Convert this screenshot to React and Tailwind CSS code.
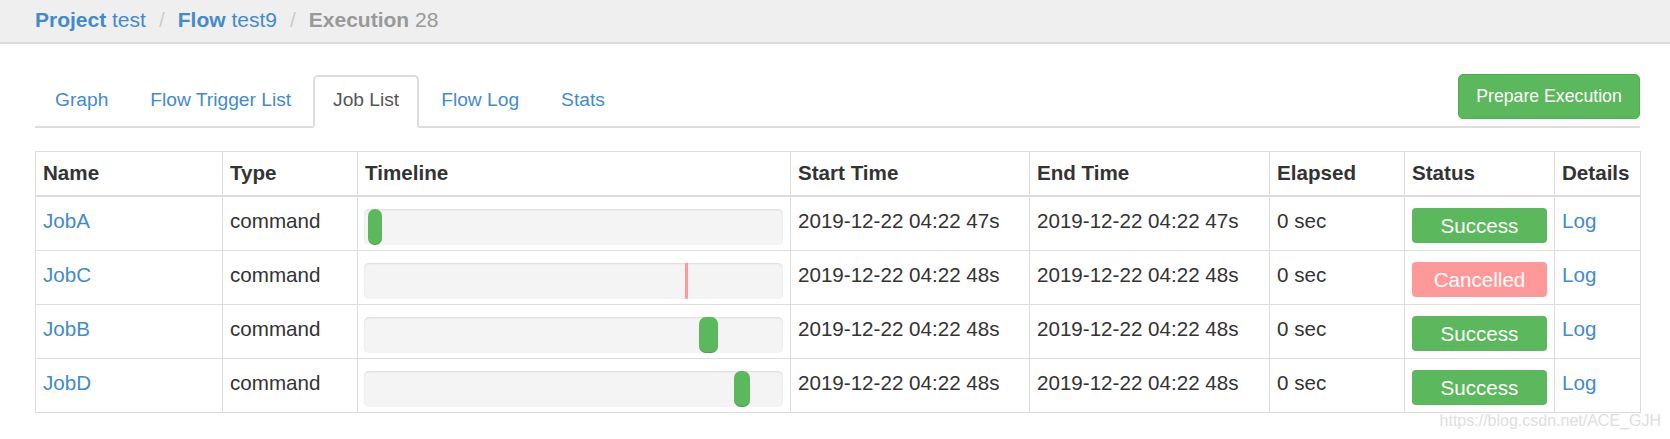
import React from "react";

const tabs = ["Graph", "Flow Trigger List", "Job List", "Flow Log", "Stats"];

const jobs = [
  { name: "JobA", start: "2019-12-22 04:22 47s", end: "2019-12-22 04:22 47s", status: "Success", left: 1.05, width: 3.2, kind: "pill" },
  { name: "JobC", start: "2019-12-22 04:22 48s", end: "2019-12-22 04:22 48s", status: "Cancelled", left: 76.5, width: 0.85, kind: "line" },
  { name: "JobB", start: "2019-12-22 04:22 48s", end: "2019-12-22 04:22 48s", status: "Success", left: 79.9, width: 4.6, kind: "pill" },
  { name: "JobD", start: "2019-12-22 04:22 48s", end: "2019-12-22 04:22 48s", status: "Success", left: 88.4, width: 3.8, kind: "pill" },
];

const cols = [187, 135, 433, 239, 240, 135, 150, 86];
const heads = ["Name", "Type", "Timeline", "Start Time", "End Time", "Elapsed", "Status", "Details"];

export default function App() {
  return (
    <div className="relative w-full h-[439px] bg-white text-[#333] font-['Liberation_Sans',Arial,sans-serif] overflow-hidden">
      {/* breadcrumb header */}
      <div className="h-[44px] bg-[#efefef] border-b-2 border-[#dadada] pl-[35px] flex items-start">
        <div className="text-[21px] leading-[40px] h-[42px] flex whitespace-pre">
          <span className="text-[#428bca]"><b>Project</b> test</span>
          <span className="text-[#cccccc] mx-[13px]">/</span>
          <span className="text-[#428bca]"><b>Flow</b> test9</span>
          <span className="text-[#cccccc] mx-[13px]">/</span>
          <span className="text-[#999999]"><b>Execution</b> 28</span>
        </div>
      </div>

      <div className="pl-[35px] pr-[30px]">
        {/* tabs */}
        <div className="mt-[30px] flex items-end justify-between border-b-2 border-[#dddddd]">
          <ul className="flex -mb-[2px]">
            {tabs.map((t) => {
              const active = t === "Job List";
              return (
                <li
                  key={t}
                  className={
                    "mr-[2px] px-[18px] pt-[9px] pb-[13px] border-2 rounded-t-[5px] text-[19.2px] leading-[27px] " +
                    (active
                      ? "border-[#dddddd] border-b-white bg-white text-[#555555]"
                      : "border-transparent text-[#428bca]")
                  }
                >
                  {t}
                </li>
              );
            })}
          </ul>
          <button className="mb-[7px] w-[182px] h-[45px] bg-[#5cb85c] border border-[#4cae4c] rounded-[5px] text-white text-[17.7px] leading-[43px] text-center">
            Prepare Execution
          </button>
        </div>

        {/* table */}
        <table className="mt-[23px] w-[1605px] table-fixed border-collapse border border-[#dddddd] text-[20.6px]">
          <colgroup>
            {cols.map((w, i) => (
              <col key={i} style={{ width: w }} />
            ))}
          </colgroup>
          <thead>
            <tr>
              {heads.map((h) => (
                <th
                  key={h}
                  className="text-left font-bold align-top px-[7px] pt-[7px] pb-[8px] leading-[28px] border border-[#dddddd] border-b-2"
                >
                  {h}
                </th>
              ))}
            </tr>
          </thead>
          <tbody>
            {jobs.map((j) => (
              <tr key={j.name}>
                <td className="align-top px-[7px] pt-[10px] pb-[5px] leading-[28px] border border-[#dddddd] text-[#428bca]">
                  {j.name}
                </td>
                <td className="align-top px-[7px] pt-[10px] pb-[5px] leading-[28px] border border-[#dddddd]">command</td>
                <td className="align-top pl-[6px] pr-[7px] pt-[10px] pb-[5px] leading-[28px] border border-[#dddddd]">
                  <div className="mt-[2px] h-[36px] flex bg-[#f4f4f4] rounded-[5px] shadow-[inset_0_1px_2px_rgba(0,0,0,0.1)] overflow-hidden">
                    {j.kind === "pill" ? (
                      <div
                        className="h-full bg-[#5cb85c] rounded-[7px] shadow-[inset_0_-1px_0_rgba(0,0,0,0.15)]"
                        style={{ marginLeft: j.left + "%", width: j.width + "%" }}
                      />
                    ) : (
                      <div
                        className="h-full bg-[#ff9999] rounded-b-[2px]"
                        style={{ marginLeft: j.left + "%", width: j.width + "%" }}
                      />
                    )}
                  </div>
                </td>
                <td className="align-top px-[7px] pt-[10px] pb-[5px] leading-[28px] border border-[#dddddd]">{j.start}</td>
                <td className="align-top px-[7px] pt-[10px] pb-[5px] leading-[28px] border border-[#dddddd]">{j.end}</td>
                <td className="align-top px-[7px] pt-[10px] pb-[5px] leading-[28px] border border-[#dddddd]">0 sec</td>
                <td className="align-top px-[7px] pt-[10px] pb-[5px] leading-[28px] border border-[#dddddd]">
                  <div
                    className={
                      "mt-[1px] h-[35px] rounded-[4px] text-white text-center leading-[35px] " +
                      (j.status === "Success" ? "bg-[#5cb85c]" : "bg-[#ff9999]")
                    }
                  >
                    {j.status}
                  </div>
                </td>
                <td className="align-top px-[7px] pt-[10px] pb-[5px] leading-[28px] border border-[#dddddd] text-[#428bca]">Log</td>
              </tr>
            ))}
          </tbody>
        </table>
      </div>

      <div className="absolute right-[9px] top-[411px] text-[16px] leading-[20px] text-[#dedede]">
        https://blog.csdn.net/ACE_GJH
      </div>
    </div>
  );
}
